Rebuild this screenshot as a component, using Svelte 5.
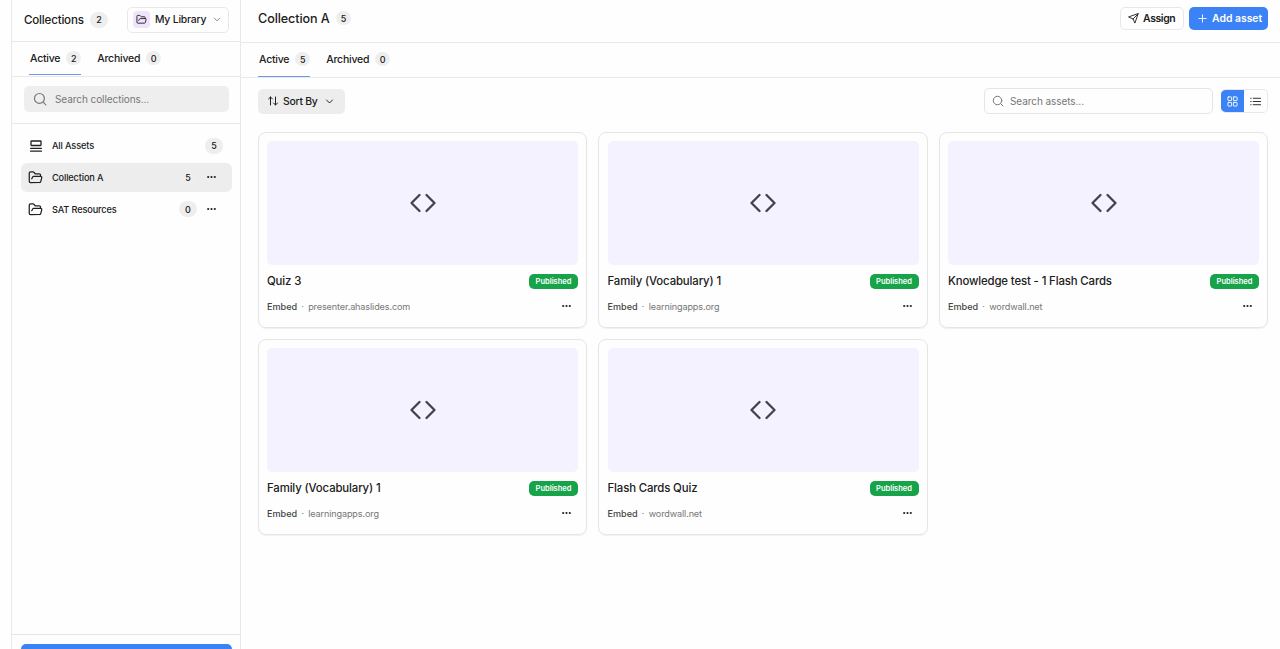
<script lang="ts">
	interface Collection {
		name: string;
		count: number;
	}

	interface Asset {
		title: string;
		source: string;
	}

	const collections: Collection[] = [
		{ name: 'Collection A', count: 5 },
		{ name: 'SAT Resources', count: 0 }
	];

	const assets: Asset[] = [
		{ title: 'Quiz 3', source: 'presenter.ahaslides.com' },
		{ title: 'Family (Vocabulary) 1', source: 'learningapps.org' },
		{ title: 'Knowledge test - 1 Flash Cards', source: 'wordwall.net' },
		{ title: 'Family (Vocabulary) 1', source: 'learningapps.org' },
		{ title: 'Flash Cards Quiz', source: 'wordwall.net' }
	];

	let selected = $state('Collection A');
	let collectionTab = $state('active');
	let assetTab = $state('active');
	let view = $state('grid');
	let collectionQuery = $state('');
	let assetQuery = $state('');

	const visibleAssets = $derived(
		assets.filter((a) => a.title.toLowerCase().includes(assetQuery.toLowerCase()))
	);
</script>

{#snippet folder()}
	<svg class="folder" viewBox="0 0 24 24">
		<path d="m6 14 1.500-2.900A2 2 0 0 1 9.240 10H20a2 2 0 0 1 1.940 2.500l-1.540 6a2 2 0 0 1-1.950 1.500H4a2 2 0 0 1-2-2V5a2 2 0 0 1 2-2h3.900a2 2 0 0 1 1.690.9l.81 1.200a2 2 0 0 0 1.670.9H18a2 2 0 0 1 2 2v2" />
	</svg>
{/snippet}

{#snippet dots()}
	<svg class="dots" viewBox="0 0 12 4">
		<circle cx="2.400" cy="2" r="1.200" /><circle cx="6" cy="2" r="1.200" /><circle cx="9.600" cy="2" r="1.200" />
	</svg>
{/snippet}

{#snippet searchIcon()}
	<svg class="search-icon" viewBox="0 0 24 24"><circle cx="11" cy="11" r="8.500" /><path d="m17.500 17.500 4.500 4.500" /></svg>
{/snippet}

<div class="app">
	<aside class="sidebar">
		<header class="side-header">
			<h2>Collections</h2>
			<span class="count">2</span>
			<button class="library">
				<span class="library-icon">{@render folder()}</span>
				<span class="library-name">My Library</span>
				<svg class="chevron" viewBox="0 0 24 24"><path d="m4 8 8 8 8-8" /></svg>
			</button>
		</header>
		<nav class="tabs side-tabs">
			<button class:active={collectionTab === 'active'} onclick={() => (collectionTab = 'active')}>
				<span class="tab-name">Active</span><span class="count small">2</span>
			</button>
			<button class:active={collectionTab === 'archived'} onclick={() => (collectionTab = 'archived')}>
				<span class="tab-name">Archived</span><span class="count small">0</span>
			</button>
		</nav>
		<div class="side-search">
			<label class="search filled">
				{@render searchIcon()}
				<input placeholder="Search collections..." bind:value={collectionQuery} />
			</label>
		</div>
		<div class="list">
			<button class="item all" class:selected={selected === 'All Assets'} onclick={() => (selected = 'All Assets')}>
				<svg class="stack" viewBox="0 0 14 14"><rect x="2" y="2" width="10" height="4.500" rx="0.500" /><path d="M1.600 9.300h10.800M1.600 12.200h10.800" /></svg>
				<span class="item-name">All Assets</span>
				<span class="count">5</span>
			</button>
			{#each collections as c}
				<button class="item" class:selected={selected === c.name} onclick={() => (selected = c.name)}>
					{@render folder()}
					<span class="item-name">{c.name}</span>
					<span class="count">{c.count}</span>
					{@render dots()}
				</button>
			{/each}
		</div>
		<footer><button class="create" aria-label="Create collection"></button></footer>
	</aside>

	<main>
		<header class="main-header">
			<h1>Collection A</h1>
			<span class="count small">5</span>
			<div class="actions">
				<button class="assign">
					<svg viewBox="0 0 24 24"><path d="m22 2-7 20-4-9-9-4zM22 2 11 13" /></svg>
					<span>Assign</span>
				</button>
				<button class="add">
					<svg viewBox="0 0 24 24"><path d="M12 4v16M4 12h16" /></svg>
					<span>Add asset</span>
				</button>
			</div>
		</header>
		<nav class="tabs">
			<button class:active={assetTab === 'active'} onclick={() => (assetTab = 'active')}>
				<span class="tab-name">Active</span><span class="count small">5</span>
			</button>
			<button class:active={assetTab === 'archived'} onclick={() => (assetTab = 'archived')}>
				<span class="tab-name">Archived</span><span class="count small">0</span>
			</button>
		</nav>
		<div class="toolbar">
			<button class="sort">
				<svg class="sort-icon" viewBox="0 0 24 24"><path d="M7 20V4M3 8l4-4 4 4M17 4v16M13 16l4 4 4-4" /></svg>
				<span>Sort By</span>
				<svg class="chevron" viewBox="0 0 24 24"><path d="m4 8 8 8 8-8" /></svg>
			</button>
			<label class="search outlined">
				{@render searchIcon()}
				<input placeholder="Search assets..." bind:value={assetQuery} />
			</label>
			<div class="view">
				<button class:on={view === 'grid'} aria-label="Grid view" onclick={() => (view = 'grid')}>
					<svg viewBox="0 0 24 24"><rect x="2" y="2" width="8" height="8" rx="1" /><rect x="14" y="2" width="8" height="8" rx="1" /><rect x="2" y="14" width="8" height="8" rx="1" /><rect x="14" y="14" width="8" height="8" rx="1" /></svg>
				</button>
				<button class:on={view === 'list'} aria-label="List view" onclick={() => (view = 'list')}>
					<svg viewBox="0 0 24 24"><path d="M7 5h16M7 12h16M7 19h16M1.500 5h1M1.500 12h1M1.500 19h1" /></svg>
				</button>
			</div>
		</div>
		<div class="grid">
			{#each visibleAssets as asset}
				<article class="card">
					<div class="thumb">
						<svg viewBox="0 0 28 20"><path d="M10.500 2 2.500 10l8 8M17.500 2l8 8-8 8" /></svg>
					</div>
					<div class="title-row">
						<h3>{asset.title}</h3>
						<span class="status">Published</span>
					</div>
					<div class="meta">
						<span class="kind">Embed</span>
						<span class="sep">·</span>
						<span class="source">{asset.source}</span>
						{@render dots()}
					</div>
				</article>
			{/each}
		</div>
	</main>
</div>

<style>
	:global(body) {
		overflow: hidden;
	}

	.app {
		display: flex;
		box-sizing: border-box;
		height: 100vh;
		padding-left: 11px;
		background: #fefefe;
		color: #202020;
		font-family: Inter, 'Liberation Sans', sans-serif;
	}

	.app * {
		box-sizing: border-box;
	}

	button {
		display: flex;
		align-items: center;
		margin: 0;
		padding: 0;
		border: 0;
		background: none;
		color: inherit;
		font: inherit;
		cursor: pointer;
	}

	svg {
		flex: none;
		fill: none;
		stroke: currentColor;
		stroke-width: 2;
		stroke-linecap: round;
		stroke-linejoin: round;
	}

	h1, h2, h3 {
		margin: 0;
		font-weight: 500;
		white-space: nowrap;
	}

	.sidebar {
		display: flex;
		flex-direction: column;
		flex: none;
		width: 230px;
		border-left: 1px solid #e8e8e8;
		border-right: 1px solid #e8e8e8;
	}

	.side-header {
		display: flex;
		align-items: center;
		height: 42px;
		padding: 0 11px 2px;
		border-bottom: 1px solid #e8e8e8;
	}

	h2 {
		width: 67px;
		padding-left: 1px;
		font-size: 11.6px;
		letter-spacing: -0.2px;
	}

	.count {
		display: flex;
		align-items: center;
		justify-content: center;
		width: 18px;
		height: 16px;
		border-radius: 8px;
		background: #eee;
		font-size: 9px;
		font-weight: 500;
	}

	.count.small {
		width: 15px;
		height: 14px;
	}

	.library {
		width: 102px;
		height: 26px;
		margin-left: auto;
		padding: 0 7px 0 5px;
		border: 1px solid #e8e8e8;
		border-radius: 5px;
	}

	.library-icon {
		display: flex;
		align-items: center;
		justify-content: center;
		width: 17px;
		height: 17px;
		border-radius: 4px;
		background: #f0e3fc;
	}

	.library-icon .folder {
		width: 11px;
		height: 11px;
	}

	.library-name {
		flex: 1;
		margin-left: 5px;
		font-size: 10.4px;
		font-weight: 500;
		letter-spacing: -0.2px;
		text-align: left;
		white-space: nowrap;
	}

	.chevron {
		width: 9px;
		height: 9px;
		stroke-width: 2.6;
	}

	.library .chevron {
		width: 8px;
		color: #777;
	}

	.tabs {
		display: flex;
		gap: 15px;
		height: 35px;
		padding-left: 17px;
		border-bottom: 1px solid #e8e8e8;
		font-size: 10.5px;
		font-weight: 500;
	}

	.tabs button {
		height: 34px;
		padding: 0 0 1px 1px;
		border-bottom: 1px solid transparent;
	}

	.tabs button.active {
		border-bottom-color: #6b9bea;
	}

	.tab-name {
		margin-right: 6px;
		letter-spacing: -0.23px;
	}

	.side-tabs button {
		height: 33px;
		padding-bottom: 0;
	}

	.side-search {
		height: 47px;
		padding: 9px 11px 0 12px;
		border-bottom: 1px solid #e8e8e8;
	}

	.search {
		display: flex;
		align-items: center;
		border-radius: 5px;
		color: #777;
	}

	.search-icon {
		width: 12px;
		height: 12px;
	}

	.search input {
		flex: 1;
		min-width: 0;
		padding: 0;
		border: 0;
		outline: 0;
		background: none;
		color: #202020;
		font: inherit;
		font-size: 10px;
		letter-spacing: -0.07px;
	}

	.search input::placeholder {
		color: #777;
		opacity: 1;
	}

	.filled {
		height: 26px;
		padding: 0 9px;
		gap: 8px;
		background: #eee;
	}

	.filled .search-icon {
		width: 14px;
		height: 14px;
	}

	.list {
		display: flex;
		flex: 1;
		flex-direction: column;
		gap: 3px;
		padding: 7px 8px 0 9px;
	}

	.item {
		width: 211px;
		height: 29px;
		padding: 0 15px 1px 7px;
		border-radius: 6px;
		font-size: 9.2px;
		font-weight: 500;
	}

	.item.all {
		padding: 0 9px 0 8px;
	}

	.item.selected {
		background: #ededed;
	}

	.item .folder {
		width: 15px;
		height: 15px;
	}

	.stack {
		width: 14px;
		height: 14px;
		stroke-width: 1.3;
	}

	.item-name {
		flex: 1;
		margin-left: 9px;
		letter-spacing: -0.14px;
		text-align: left;
	}

	.item .dots {
		margin-left: 9px;
	}

	.dots {
		width: 11px;
		height: 4px;
		fill: #202020;
		stroke: none;
	}

	footer {
		height: 15px;
		padding: 9px 8px 0 9px;
		border-top: 1px solid #e5e5e5;
		overflow: hidden;
	}

	.create {
		width: 211px;
		height: 26px;
		border-radius: 5px;
		background: #3b82f6;
	}

	main {
		flex: 1;
		min-width: 0;
	}

	.main-header {
		display: flex;
		align-items: center;
		height: 43px;
		padding: 0 12px 6px 17px;
		border-bottom: 1px solid #e8e8e8;
	}

	h1 {
		width: 78px;
		font-size: 12.6px;
		letter-spacing: -0.1px;
	}

	.actions {
		display: flex;
		gap: 5px;
		margin-left: auto;
		font-size: 10.4px;
		font-weight: 600;
		letter-spacing: -0.22px;
	}

	.actions button {
		height: 23px;
		border-radius: 5px;
		white-space: nowrap;
	}

	.actions svg {
		width: 11px;
		height: 11px;
	}

	.assign {
		width: 64px;
		padding-left: 7px;
		gap: 4px;
		border: 1px solid #e8e8e8;
		letter-spacing: -0.35px;
	}

	.add {
		width: 79px;
		padding-left: 8px;
		gap: 4px;
		background: #3b82f6;
		color: #fff;
	}

	.toolbar {
		display: flex;
		align-items: center;
		padding: 10px 12px 0 17px;
	}

	.sort {
		width: 87px;
		height: 25px;
		padding: 0 11px 0 9px;
		border-radius: 5px;
		background: #ededed;
		font-size: 10.4px;
		font-weight: 500;
		letter-spacing: -0.25px;
	}

	.sort span {
		flex: 1;
		margin-left: 4px;
		text-align: left;
	}

	.sort-icon {
		width: 12px;
		height: 12px;
	}

	.outlined {
		width: 229px;
		height: 26px;
		margin-left: auto;
		padding: 0 7px;
		gap: 6px;
		border: 1px solid #e5e5e5;
	}

	.view {
		display: flex;
		width: 47px;
		height: 24px;
		margin-left: 8px;
		border: 1px solid #e8e8e8;
		border-left: 0;
		border-radius: 5px;
		overflow: hidden;
	}

	.view button {
		flex: 1;
		justify-content: center;
	}

	.view button.on {
		background: #3b82f6;
		color: #fff;
	}

	.view svg {
		width: 11px;
		height: 11px;
	}

	.grid {
		display: grid;
		grid-template-columns: repeat(3, 1fr);
		gap: 11px;
		padding: 18px 12px 0 16.5px;
	}

	.card {
		min-width: 0;
		height: 196px;
		padding: 8px 8px 8px 8.5px;
		border: 1px solid #e5e5e5;
		border-radius: 8px;
		box-shadow: 0 1px 1px rgba(0, 0, 0, 0.06);
	}

	.thumb {
		display: flex;
		align-items: center;
		justify-content: center;
		height: 124px;
		border-radius: 5px;
		background: #f4f2ff;
		color: #44404c;
	}

	.thumb svg {
		width: 28px;
		height: 20px;
		stroke-width: 2.3;
	}

	.title-row {
		display: flex;
		align-items: center;
		justify-content: space-between;
		height: 16px;
		margin-top: 8px;
	}

	h3 {
		font-size: 11.4px;
		letter-spacing: -0.14px;
	}

	.status {
		width: 49px;
		height: 15px;
		border-radius: 5px;
		background: #16a34a;
		color: #fff;
		font-size: 7.5px;
		font-weight: 600;
		line-height: 15px;
		text-align: center;
	}

	.meta {
		display: flex;
		align-items: center;
		height: 16px;
		margin-top: 9px;
		padding-right: 6px;
		font-size: 9.1px;
	}

	.kind {
		color: #444;
		font-weight: 500;
	}

	.sep {
		width: 11px;
		color: #777;
		text-align: center;
	}

	.source {
		color: #777;
		letter-spacing: -0.13px;
	}

	.meta .dots {
		margin-left: auto;
	}
</style>
